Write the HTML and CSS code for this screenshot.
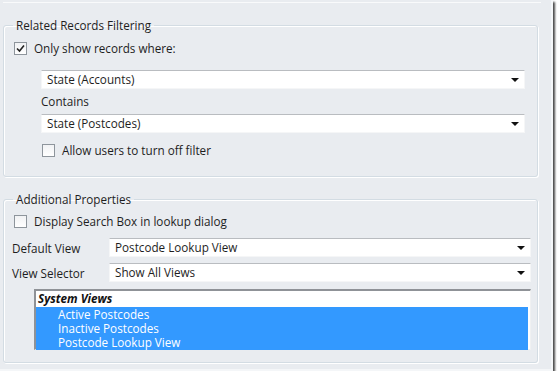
FILE: index.html
```html
<!DOCTYPE html>
<html lang="en">
<head>
    <meta charset="UTF-8">
    <title>Lookup Properties</title>
    <link rel="stylesheet" href="styles.css">
</head>
<body>
    <div class="window">
        <div class="prev-group"></div>

        <fieldset class="group group-filter">
            <legend>Related Records Filtering</legend>
            <div class="check-row">
                <span class="box"><svg width="9" height="9" viewBox="0 0 9 9"><path d="M1 4.5 L3.5 7 L8 1.5" fill="none" stroke="#222" stroke-width="1.6"/></svg></span>
                <span>Only show records where:</span>
            </div>
            <div class="indent">
                <div class="select">State (Accounts)<span class="arrow"></span></div>
                <div class="field-label">Contains</div>
                <div class="select">State (Postcodes)<span class="arrow"></span></div>
                <div class="check-row">
                    <span class="box"></span>
                    <span>Allow users to turn off filter</span>
                </div>
            </div>
        </fieldset>

        <fieldset class="group group-props">
            <legend>Additional Properties</legend>
            <div class="check-row">
                <span class="box"></span>
                <span>Display Search Box in lookup dialog</span>
            </div>
            <div class="form-row">
                <span class="row-label">Default View</span>
                <div class="select">Postcode Lookup View<span class="arrow"></span></div>
            </div>
            <div class="form-row">
                <span class="row-label">View Selector</span>
                <div class="select">Show All Views<span class="arrow"></span></div>
            </div>
            <div class="listbox">
                <div class="list-head">System Views</div>
                <div class="list-selected">
                    <div class="list-item">Active Postcodes</div>
                    <div class="list-item">Inactive Postcodes</div>
                    <div class="list-item">Postcode Lookup View</div>
                </div>
            </div>
        </fieldset>
    </div>
</body>
</html>
```

FILE: styles.css
```css
* {
    box-sizing: border-box;
}
body {
    margin: 0;
    background: #fff;
    font-family: 'Open Sans', 'Liberation Sans', sans-serif;
    font-size: 11.7px;
    color: #1e1e1e;
}
.window {
    width: 553px;
    height: 371px;
    background: #e9ecf0;
    border-right: 2px solid #f4f6f8;
    border-bottom: 2px solid #f4f6f8;
    box-shadow: 2px 2px 2px #4a4a4a;
    padding: 0 13px 0 3px;
    display: flex;
    flex-direction: column;
}
.prev-group {
    height: 3px;
    border-bottom: 1px solid #f9fafb;
    margin-right: -3px;
}
.group {
    margin: 0;
    border: 1px solid #d3dce3;
    border-radius: 3px;
    box-shadow: 1px 1px 0 #fff, inset 1px 1px 0 #fff;
    padding: 0 12px 0 10px;
}
.group legend {
    padding: 0 3px;
    margin-left: -1px;
    line-height: 16px;
}
.group-filter {
    margin-top: 14px;
    height: 160px;
    padding-top: 7px;
}
.group-props {
    margin-top: 14px;
    height: 172px;
    padding-top: 6px;
    padding-right: 6px;
}
.check-row {
    display: flex;
    align-items: center;
    gap: 7px;
    height: 16px;
}
.box {
    width: 13px;
    height: 13px;
    border: 1px solid #8e959c;
    background: linear-gradient(#f1f2f4, #fff);
    display: flex;
    align-items: center;
    justify-content: center;
}
.indent {
    padding-left: 27px;
    margin-top: 14px;
    display: flex;
    flex-direction: column;
}
.select {
    position: relative;
    height: 19px;
    line-height: 17px;
    background: #fff;
    border: 1px solid #f5f6f7;
    border-top-color: #b9bcc0;
    padding-left: 5px;
}
.arrow {
    position: absolute;
    right: 5px;
    top: 7px;
    border-left: 4px solid transparent;
    border-right: 4px solid transparent;
    border-top: 4px solid #111;
}
.field-label {
    height: 25px;
    line-height: 25px;
}
.indent .check-row {
    margin-top: 9px;
    padding-left: 1px;
}
.form-row {
    display: flex;
    align-items: center;
    height: 19px;
    margin-left: -2px;
}
.form-row + .form-row {
    margin-top: 6px;
}
.group-props .check-row {
    margin-bottom: 9px;
}
.row-label {
    width: 97px;
    flex: none;
}
.form-row .select {
    flex: 1;
}
.listbox {
    margin: 7px 0 0 20px;
    height: 61px;
    background: #fff;
    border: 1px solid #f0f1f2;
    border-top: 2px solid #8f9297;
    border-left: 2px solid #8f9297;
    padding: 0 2px 0 0;
}
.list-head {
    font-weight: bold;
    font-style: italic;
    height: 16px;
    line-height: 14px;
    padding-left: 2px;
    color: #111;
}
.list-selected {
    background: #3399ff;
    color: #fff;
    padding: 0 0 1px 22px;
}
.list-item {
    height: 14px;
    line-height: 14px;
}
```
